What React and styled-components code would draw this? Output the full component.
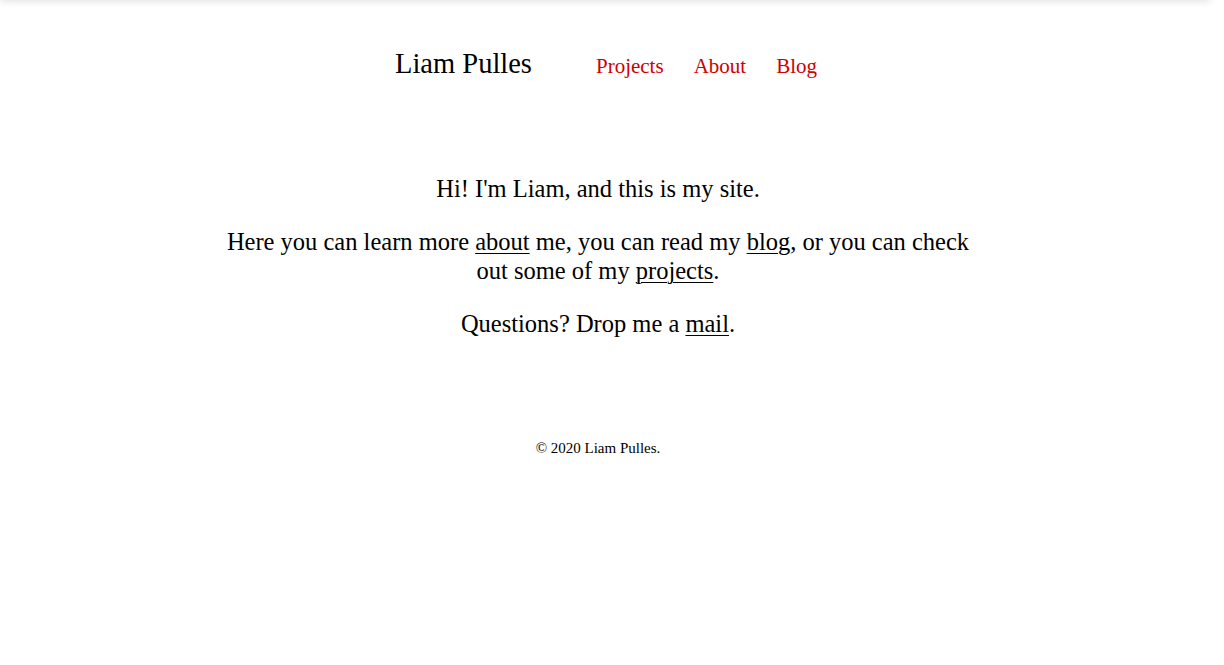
import React from 'react';
import styled, { createGlobalStyle } from 'styled-components';

const GlobalStyle = createGlobalStyle`
  html, body {
    margin: 0;
    padding: 0;
    background: #fff;
    font-family: "Liberation Serif", "DejaVu Serif", serif;
    color: #000;
  }
`;

const Page = styled.div`
  width: 1196px;
  min-height: 665px;
`;

const Header = styled.header`
  display: flex;
  justify-content: center;
  align-items: baseline;
  padding-top: 48px;
  height: 86px;
  box-sizing: border-box;
  position: relative;
  &::before {
    content: '';
    position: absolute;
    top: -6px;
    left: 0;
    right: -14px;
    height: 6px;
    box-shadow: 0 0 8px rgba(0, 0, 0, 0.18);
  }
`;

const Brand = styled.div`
  font-size: 28.5px;
  margin-right: 64px;
  margin-left: 16px;
`;

const Nav = styled.nav`
  display: flex;
  gap: 30px;
`;

const NavLink = styled.a`
  color: #d00000;
  font-size: 21px;
  text-decoration: none;
`;

const Main = styled.main`
  max-width: 764px;
  margin: 88px auto 0;
  text-align: center;
  font-size: 24.5px;
  line-height: 29px;
`;

const Para = styled.p`
  margin: 0 0 24px;
`;

const Inline = styled.a`
  color: #000;
  text-decoration: underline;
  text-underline-offset: 3px;
  text-decoration-thickness: 1px;
`;

const Footer = styled.footer`
  text-align: center;
  font-size: 15px;
  margin-top: 102px;
`;

export default function App() {
  return (
    <>
      <GlobalStyle />
      <Page>
        <Header>
          <Brand>Liam Pulles</Brand>
          <Nav>
            <NavLink href="#">Projects</NavLink>
            <NavLink href="#">About</NavLink>
            <NavLink href="#">Blog</NavLink>
          </Nav>
        </Header>
        <Main>
          <Para>Hi! I'm Liam, and this is my site.</Para>
          <Para>
            Here you can learn more <Inline href="#">about</Inline> me, you can read my{' '}
            <Inline href="#">blog</Inline>, or you can check out some of my{' '}
            <Inline href="#">projects</Inline>.
          </Para>
          <Para>
            Questions? Drop me a <Inline href="#">mail</Inline>.
          </Para>
        </Main>
        <Footer>© 2020 Liam Pulles.</Footer>
      </Page>
    </>
  );
}
